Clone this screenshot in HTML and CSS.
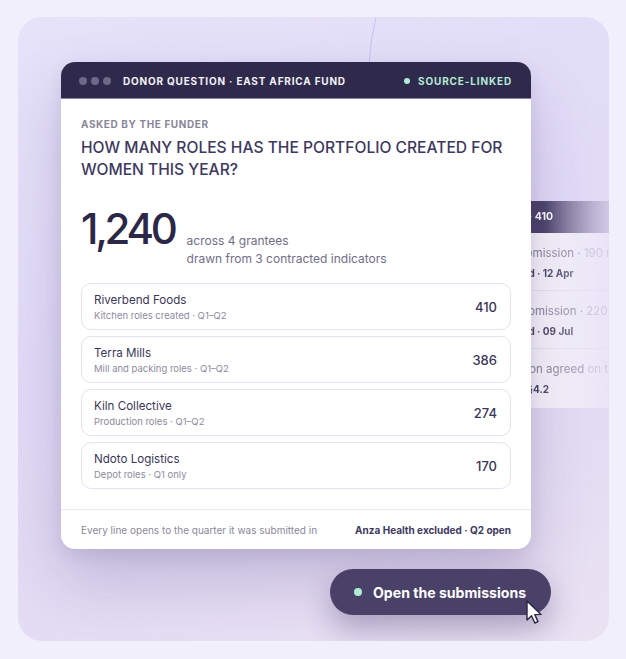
FILE: index.html
```html
<!DOCTYPE html>
<html>
<head>
<meta charset="utf-8">
<link rel="stylesheet" href="styles.css">
</head>
<body>
<div class="stage">
  <svg class="arc" width="60" height="60" viewBox="0 0 60 60"><path d="M40 0 Q34 24 33 48" fill="none" stroke="#c7c0f0" stroke-width="1"/></svg>

  <div class="back-card">
    <div class="back-head">Foods · 410</div>
    <div class="back-row">
      <div class="back-main">Q1 submission · <span class="faint">190 roles</span></div>
      <div class="back-sub">Verified · 12 Apr</div>
    </div>
    <div class="back-row">
      <div class="back-main">Q2 submission · <span class="faint">220 roles</span></div>
      <div class="back-sub">Verified · 09 Jul</div>
    </div>
    <div class="back-row last">
      <div class="back-main">Definition agreed <span class="faint">on the contract</span></div>
      <div class="back-sub">Clause §4.2</div>
    </div>
  </div>

  <div class="card">
    <div class="card-head">
      <div class="dots"><span></span><span></span><span></span></div>
      <div class="head-title">DONOR QUESTION · EAST AFRICA FUND</div>
      <div class="head-status"><span class="mint-dot"></span>SOURCE-LINKED</div>
    </div>
    <div class="card-body">
      <div class="eyebrow">ASKED BY THE FUNDER</div>
      <h1 class="question">HOW MANY ROLES HAS THE PORTFOLIO CREATED FOR WOMEN THIS YEAR?</h1>
      <div class="total">
        <div class="big">1,240</div>
        <div class="total-note">
          <div>across 4 grantees</div>
          <div>drawn from 3 contracted indicators</div>
        </div>
      </div>
      <div class="rows">
        <div class="row">
          <div class="row-text"><div class="row-name">Riverbend Foods</div><div class="row-sub">Kitchen roles created · Q1–Q2</div></div>
          <div class="row-num">410</div>
        </div>
        <div class="row">
          <div class="row-text"><div class="row-name">Terra Mills</div><div class="row-sub">Mill and packing roles · Q1–Q2</div></div>
          <div class="row-num">386</div>
        </div>
        <div class="row">
          <div class="row-text"><div class="row-name">Kiln Collective</div><div class="row-sub">Production roles · Q1–Q2</div></div>
          <div class="row-num">274</div>
        </div>
        <div class="row">
          <div class="row-text"><div class="row-name">Ndoto Logistics</div><div class="row-sub">Depot roles · Q1 only</div></div>
          <div class="row-num">170</div>
        </div>
      </div>
    </div>
    <div class="card-foot">
      <div class="foot-note">Every line opens to the quarter it was submitted in</div>
      <div class="foot-strong">Anza Health excluded · Q2 open</div>
    </div>
  </div>

  <div class="cta-wrap">
    <div class="cta"><span class="cta-dot"></span>Open the submissions</div>
    <svg class="cursor" width="20" height="26" viewBox="0 0 20 26"><path d="M2 1 L2 20 L6.5 15.8 L9.8 23 L13 21.6 L9.8 14.6 L16 14.4 Z" fill="#ffffff" stroke="#2a2540" stroke-width="1.4" stroke-linejoin="round"/></svg>
  </div>
</div>
</body>
</html>
```

FILE: styles.css
```css
* { box-sizing: border-box; }
html, body { margin: 0; padding: 0; }
body {
  width: 626px;
  height: 659px;
  background: #f2effd;
  font-family: Inter, "Noto Sans", sans-serif;
  padding: 17px 17px 18px 18px;
  overflow: hidden;
}
.stage {
  position: relative;
  width: 591px;
  height: 624px;
  border-radius: 24px;
  background: linear-gradient(160deg, #e6e2f9 0%, #e1dbf6 45%, #e3dcf3 75%, #ebe2f2 100%);
  overflow: hidden;
  padding: 45px 0 0 43px;
}
.arc { position: absolute; left: 318px; top: 0; }

.back-card {
  position: absolute;
  left: 462px;
  top: 184px;
  width: 150px;
  height: 207px;
  background: #f7f5fb;
  border-radius: 0 12px 12px 0;
  -webkit-mask-image: linear-gradient(90deg, #000 0%, #000 42%, rgba(0,0,0,0.35) 85%, rgba(0,0,0,0.05) 100%);
  mask-image: linear-gradient(90deg, #000 0%, #000 42%, rgba(0,0,0,0.35) 85%, rgba(0,0,0,0.05) 100%);
}
.back-head {
  height: 32px;
  background: linear-gradient(90deg, #3b3458 0%, #4d456b 45%, #9b93b5 80%, #d8d0e6 100%);
  color: #ffffff;
  font-size: 10.5px;
  font-weight: 700;
  line-height: 32px;
  padding-left: 15px;
  white-space: nowrap;
}
.back-row {
  height: 58px;
  padding: 12px 0 0 16px;
  border-bottom: 1px solid #e9e5f1;
  white-space: nowrap;
}
.back-row.last { border-bottom: none; padding-left: 11px; }
.back-main { font-size: 11.5px; color: #8a8599; line-height: 16px; }
.back-main .faint { color: #b9b5c6; }
.back-sub { font-size: 10px; font-weight: 700; color: #4a4566; margin-top: 5px; line-height: 14px; }

.card {
  position: relative;
  width: 470px;
  background: #ffffff;
  border-radius: 14px;
  box-shadow: 0 30px 60px rgba(70, 50, 120, 0.22), 0 6px 16px rgba(70, 50, 120, 0.10);
  overflow: hidden;
}
.card-head {
  height: 37px;
  background: #2f2a4b;
  border-bottom: 1px solid #8a84a8;
  display: flex;
  align-items: center;
  padding: 1px 19px 0 18px;
  color: #f2f0f8;
  font-size: 10px;
  font-weight: 700;
  letter-spacing: 0.8px;
}
.dots { display: flex; gap: 4px; margin-right: 12px; }
.dots span { width: 8px; height: 8px; border-radius: 50%; background: #6e6889; display: block; }
.head-title { flex: 1; white-space: nowrap; }
.head-status { display: flex; align-items: center; color: #b3ead6; white-space: nowrap; letter-spacing: 0.85px; }
.mint-dot { width: 6px; height: 6px; border-radius: 50%; background: #b3ead6; margin-right: 8px; }

.card-body { padding: 18px 20px 20px 20px; }
.eyebrow {
  font-size: 10px;
  font-weight: 700;
  color: #8a8699;
  letter-spacing: 0.6px;
  line-height: 14px;
}
.question {
  margin: 6px 0 0 0;
  font-size: 15.6px;
  font-weight: 500;
  color: #3e3860;
  line-height: 22px;
  letter-spacing: 0;
}
.total { display: flex; align-items: flex-end; margin-top: 26px; }
.big {
  font-size: 42px;
  font-weight: 500;
  color: #2c2746;
  letter-spacing: -3.3px;
  line-height: 44px;
  margin-right: 12px;
}
.total-note {
  font-size: 12px;
  color: #726d86;
  line-height: 18px;
  margin-bottom: -17px;
}
.rows { display: flex; flex-direction: column; gap: 6px; margin-top: 32px; }
.row {
  height: 47px;
  border: 1px solid #e4e2ee;
  border-radius: 10px;
  display: flex;
  align-items: center;
  padding: 0 13px 0 12px;
}
.row-text { flex: 1; }
.row-name { font-size: 11.6px; color: #3b3658; line-height: 16px; }
.row-sub { font-size: 9.5px; color: #8e8a9e; line-height: 13px; margin-top: 1px; }
.row-num { font-size: 13px; color: #3b3658; font-weight: 500; }

.card-foot {
  border-top: 1px solid #ebe9f2;
  height: 40px;
  display: flex;
  align-items: center;
  justify-content: space-between;
  padding: 0 20px;
  font-size: 10px;
}
.foot-note { color: #8b879b; }
.foot-strong { color: #3e3860; font-weight: 700; }

.cta-wrap {
  position: absolute;
  left: 312px;
  top: 552px;
}
.cta {
  height: 46px;
  padding: 0 25px 0 24px;
  border-radius: 23px;
  background: #4a4169;
  color: #ffffff;
  font-size: 14.1px;
  font-weight: 700;
  display: flex;
  align-items: center;
  box-shadow: 0 14px 30px rgba(50, 35, 90, 0.32);
  white-space: nowrap;
}
.cta-dot { width: 8px; height: 8px; border-radius: 50%; background: #b3ead6; margin-right: 11px; }
.cursor { position: absolute; left: 195px; top: 31px; }
```
